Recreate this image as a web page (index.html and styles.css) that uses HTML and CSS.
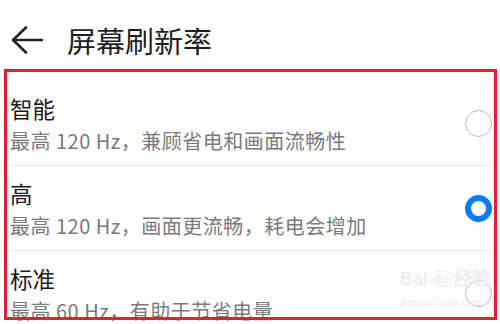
FILE: index.html
```html
<!DOCTYPE html>
<html lang="zh-CN">
<head>
<meta charset="utf-8">
<title>屏幕刷新率</title>
<link rel="stylesheet" href="styles.css">
</head>
<body>
<div class="page">
  <header class="header">
    <svg class="back" width="32" height="28" viewBox="0 0 32 28" aria-hidden="true">
      <path d="M15 1.5 L2 14 L15 26.5 M2 14 H31" fill="none" stroke="#222" stroke-width="2.6" stroke-linecap="round" stroke-linejoin="round"/>
    </svg>
    <h1 class="title">屏幕刷新率</h1>
  </header>
  <ul class="list">
    <li class="row">
      <div class="text">
        <div class="name">智能</div>
        <div class="desc">最高 120 Hz，兼顾省电和画面流畅性</div>
      </div>
      <span class="radio"></span>
    </li>
    <li class="row">
      <div class="text">
        <div class="name">高</div>
        <div class="desc">最高 120 Hz，画面更流畅，耗电会增加</div>
      </div>
      <span class="radio checked"></span>
    </li>
    <li class="row">
      <div class="text">
        <div class="name">标准</div>
        <div class="desc">最高 60 Hz，有助于节省电量</div>
      </div>
      <span class="radio"></span>
    </li>
  </ul>
  <div class="watermark">
    <div class="wm-top"><span>Bai</span><span class="wm-du">du</span><span>经验</span></div>
    <div class="wm-url">jingyan.baidu.com</div>
  </div>
  <div class="highlight"></div>
</div>
</body>
</html>
```

FILE: styles.css
```css
* { box-sizing: border-box; }
html, body {
  margin: 0;
  padding: 0;
  background: #fff;
}
body {
  width: 500px;
  height: 324px;
  overflow: hidden;
  font-family: "Noto Sans CJK SC", "Noto Sans", sans-serif;
}
.page {
  position: relative;
  width: 500px;
  height: 321px;
  overflow: hidden;
  background: #fff;
}
.header {
  height: 81px;
  display: flex;
  align-items: center;
  padding-left: 11px;
  padding-bottom: 1px;
}
.back { display: block; }
.title {
  margin: 0 0 0 24px;
  font-size: 29px;
  font-weight: 400;
  color: #1e1e1e;
  line-height: 1;
}
.list {
  list-style: none;
  margin: 0;
  padding: 0;
}
.row {
  height: 85px;
  margin: 0 8px 0 10px;
  border-bottom: 1px solid #ebebeb;
  display: flex;
  align-items: center;
  justify-content: space-between;
}
.text {
  display: flex;
  flex-direction: column;
  padding-top: 2px;
}
.name {
  font-size: 22.5px;
  line-height: 30px;
  color: #1a1a1a;
}
.desc {
  margin-top: 4px;
  font-size: 20px;
  line-height: 28px;
  color: #7a7a7a;
  letter-spacing: 0.5px;
}
.radio {
  width: 27px;
  height: 27px;
  border-radius: 50%;
  border: 1.6px solid #b8b8b8;
  flex: none;
}
.radio.checked {
  border: 6px solid #0a7cf5;
}
.highlight {
  position: absolute;
  left: 4px;
  top: 69px;
  width: 493px;
  height: 251px;
  border: 3px solid #e1222e;
  pointer-events: none;
}
.watermark {
  position: absolute;
  left: 400px;
  top: 268px;
  color: #ededed;
  font-family: "Liberation Sans", sans-serif;
}
.wm-top {
  display: flex;
  align-items: center;
  gap: 2px;
  font-size: 18px;
  font-weight: 700;
  line-height: 22px;
}
.wm-du {
  font-size: 13px;
  border: 1.5px solid #ededed;
  border-radius: 8px;
  padding: 0 2px;
  line-height: 14px;
}
.wm-url {
  font-size: 10px;
  line-height: 14px;
  margin-top: 6px;
}
```
